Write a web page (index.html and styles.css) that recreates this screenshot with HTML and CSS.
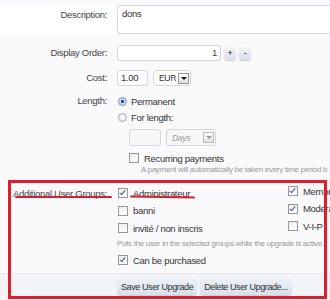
FILE: index.html
```html
<!DOCTYPE html>
<html>
<head>
  <title>Edit User Upgrade</title>
  <link rel="stylesheet" href="styles.css">
</head>
<body>
  <form class="upgrade-form">
    <div class="form-row row-description">
      <label class="row-label">Description:</label>
      <div class="row-controls">
        <div class="textarea">dons</div>
      </div>
    </div>

    <div class="form-row row-order">
      <label class="row-label">Display Order:</label>
      <div class="row-controls">
        <div class="text-input order-input">1</div>
        <span class="spin-btn">+</span>
        <span class="spin-btn">-</span>
      </div>
    </div>

    <div class="form-row row-cost">
      <label class="row-label">Cost:</label>
      <div class="row-controls">
        <div class="text-input cost-input">1.00</div>
        <div class="select-box currency">EUR <span class="select-arrow"></span></div>
      </div>
    </div>

    <div class="form-row row-length">
      <label class="row-label">Length:</label>
      <div class="row-controls column">
        <div class="choice"><span class="radio checked"></span>Permanent</div>
        <div class="choice"><span class="radio"></span>For length:</div>
        <div class="length-fields">
          <div class="text-input length-input"></div>
          <div class="select-box days disabled"><em>Days</em> <span class="select-arrow"></span></div>
        </div>
        <div class="choice recurring"><span class="checkbox"></span>Recurring payments</div>
        <div class="hint recurring-hint">A payment will automatically be taken every time period b</div>
      </div>
    </div>

    <div class="form-row row-groups">
      <label class="row-label">Additional User Groups:</label>
      <div class="row-controls groups">
        <div class="group-col">
          <div class="choice"><span class="checkbox checked"></span>Administrateur</div>
          <div class="choice"><span class="checkbox"></span>banni</div>
          <div class="choice"><span class="checkbox"></span>invité / non inscris</div>
        </div>
        <div class="group-col second">
          <div class="choice"><span class="checkbox checked"></span>Membre</div>
          <div class="choice"><span class="checkbox checked"></span>Moderateur</div>
          <div class="choice"><span class="checkbox"></span>V-I-P</div>
        </div>
      </div>
    </div>
    <div class="form-row row-hint">
      <span class="row-label"></span>
      <div class="hint">Puts the user in the selected groups while the upgrade is active.</div>
    </div>
    <div class="form-row row-purchase">
      <span class="row-label"></span>
      <div class="choice"><span class="checkbox checked"></span>Can be purchased</div>
    </div>

    <div class="submit-bar">
      <span class="row-label"></span>
      <button type="button" class="btn">Save User Upgrade</button>
      <button type="button" class="btn">Delete User Upgrade...</button>
    </div>
  </form>

  <div class="highlight-box"></div>
  <div class="scribble scribble-label"></div>
  <div class="scribble scribble-admin"></div>
</body>
</html>
```

FILE: styles.css
```css
body {
  margin: 0;
  width: 330px;
  height: 300px;
  overflow: hidden;
  position: relative;
  background-color: #fafafd;
  color: #333;
  font-family: "Liberation Sans", Arial, sans-serif;
  font-size: 9.5px;
  letter-spacing: -0.3px;
}

.upgrade-form {
  padding-top: 5px;
}

.form-row {
  display: flex;
  align-items: flex-start;
}

.row-label {
  box-sizing: border-box;
  flex: 0 0 117px;
  padding-right: 10px;
  text-align: right;
  color: #444;
  white-space: nowrap;
}

.row-controls {
  display: flex;
  align-items: center;
  gap: 3px;
}

.row-controls.column {
  flex-direction: column;
  align-items: flex-start;
  gap: 0;
}

.row-description {
  background-color: #fff;
}

.row-description .row-label {
  padding-top: 4px;
}

.textarea {
  width: 240px;
  height: 23px;
  border: 1px solid #d8d8de;
  border-right: none;
  border-radius: 3px 0 0 3px;
  background-color: #fff;
  padding: 2px 4px;
}

.text-input {
  height: 14px;
  line-height: 14px;
  border: 1px solid #d6d6dc;
  border-radius: 3px;
  background-color: #fff;
  padding: 0 3px;
}

.row-order {
  margin-top: 11px;
}

.row-order .row-label {
  padding-top: 2px;
}

.order-input {
  width: 96px;
  text-align: right;
  color: #444;
}

.spin-btn {
  width: 12px;
  height: 13px;
  line-height: 13px;
  text-align: center;
  border-radius: 3px;
  background: linear-gradient(#f4f5f8, #dcdfe7);
  box-shadow: 0 1px 1px #c8ccd6;
  font-size: 9px;
  color: #222;
}

.row-cost {
  margin-top: 9px;
}

.row-cost .row-label {
  padding-top: 2px;
}

.cost-input {
  width: 23px;
}

.select-box {
  display: flex;
  align-items: center;
  justify-content: space-between;
  height: 14px;
  border: 1px solid #d6d6dc;
  border-radius: 3px;
  background-color: #fff;
  padding: 0 1px 0 5px;
  font-size: 8.5px;
  margin-left: 2px;
}

.currency {
  width: 30px;
}

.select-arrow {
  width: 9px;
  height: 9px;
  border: 1px solid #999;
  background: linear-gradient(#fff, #ddd);
  position: relative;
}

.select-arrow::after {
  content: "";
  position: absolute;
  left: 2px;
  top: 3px;
  border-left: 3px solid transparent;
  border-right: 3px solid transparent;
  border-top: 3px solid #111;
}

.row-length {
  margin-top: 9px;
}

.choice {
  display: flex;
  align-items: center;
  height: 12px;
  white-space: nowrap;
}

.row-length .choice {
  margin-bottom: 4px;
}

.radio {
  width: 7px;
  height: 7px;
  border: 1px solid #aab;
  border-radius: 50%;
  background: radial-gradient(#fff, #d8dbe2);
  margin: 0 4px 0 1px;
}

.radio.checked {
  background: radial-gradient(#2a5a9a 30%, #cfdcef 40%);
  border-color: #7d8fb0;
}

.checkbox {
  width: 8px;
  height: 8px;
  border: 1px solid #999;
  background: linear-gradient(#eee, #fff);
  margin: 0 5px 0 1px;
  position: relative;
}

.checkbox.checked::after {
  content: "";
  position: absolute;
  left: 2px;
  top: 0;
  width: 2px;
  height: 5px;
  border: solid #3a5a98;
  border-width: 0 1.5px 1.5px 0;
  transform: rotate(40deg);
}

.length-fields {
  display: flex;
  margin: 2px 0 6px 12px;
}

.length-input {
  width: 24px;
  height: 15px;
  background-color: #f7f7f9;
}

.days {
  width: 42px;
  height: 15px;
  margin-left: 5px;
  color: #999;
  background-color: #f7f7f9;
}

.days .select-arrow {
  border-color: #bbb;
}

.days .select-arrow::after {
  border-top-color: #999;
}

.recurring {
  margin-left: 11px;
}

.hint {
  font-size: 8px;
  color: #999;
  white-space: nowrap;
}

.recurring-hint {
  margin: -3px 0 0 24px;
}

.row-groups {
  margin-top: 13px;
}

.row-groups .row-label {
  padding-top: 1px;
}

.groups {
  align-items: flex-start;
  gap: 0;
}

.group-col {
  width: 170px;
  display: flex;
  flex-direction: column;
  gap: 5.5px;
}

.group-col.second {
  margin-top: -2px;
  width: auto;
}

.row-hint {
  margin-top: 5px;
}

.row-purchase {
  margin-top: 6px;
}

.submit-bar {
  display: flex;
  align-items: flex-start;
  margin-top: 7px;
  padding-top: 4px;
  height: 28px;
  border-top: 1px solid #e6e8ee;
  background-color: #f3f4f8;
}

.btn {
  height: 17px;
  padding: 0 4px;
  margin-right: 3px;
  border: none;
  border-radius: 4px;
  background: linear-gradient(#eef2f7, #d7e0ea);
  box-shadow: 0 1px 1px #c4ccd8;
  color: #333;
  font-family: inherit;
  font-size: 9px;
  letter-spacing: -0.4px;
}

.highlight-box {
  position: absolute;
  left: 8px;
  top: 180px;
  width: 313px;
  height: 113px;
  border: 3px solid #dc1f2c;
}

.scribble {
  position: absolute;
  height: 2px;
  background-color: #d42030;
  border-radius: 2px;
}

.scribble-label {
  left: 15px;
  top: 196px;
  width: 97px;
}

.scribble-admin {
  left: 130px;
  top: 196px;
  width: 65px;
  transform: rotate(1deg);
}
```
